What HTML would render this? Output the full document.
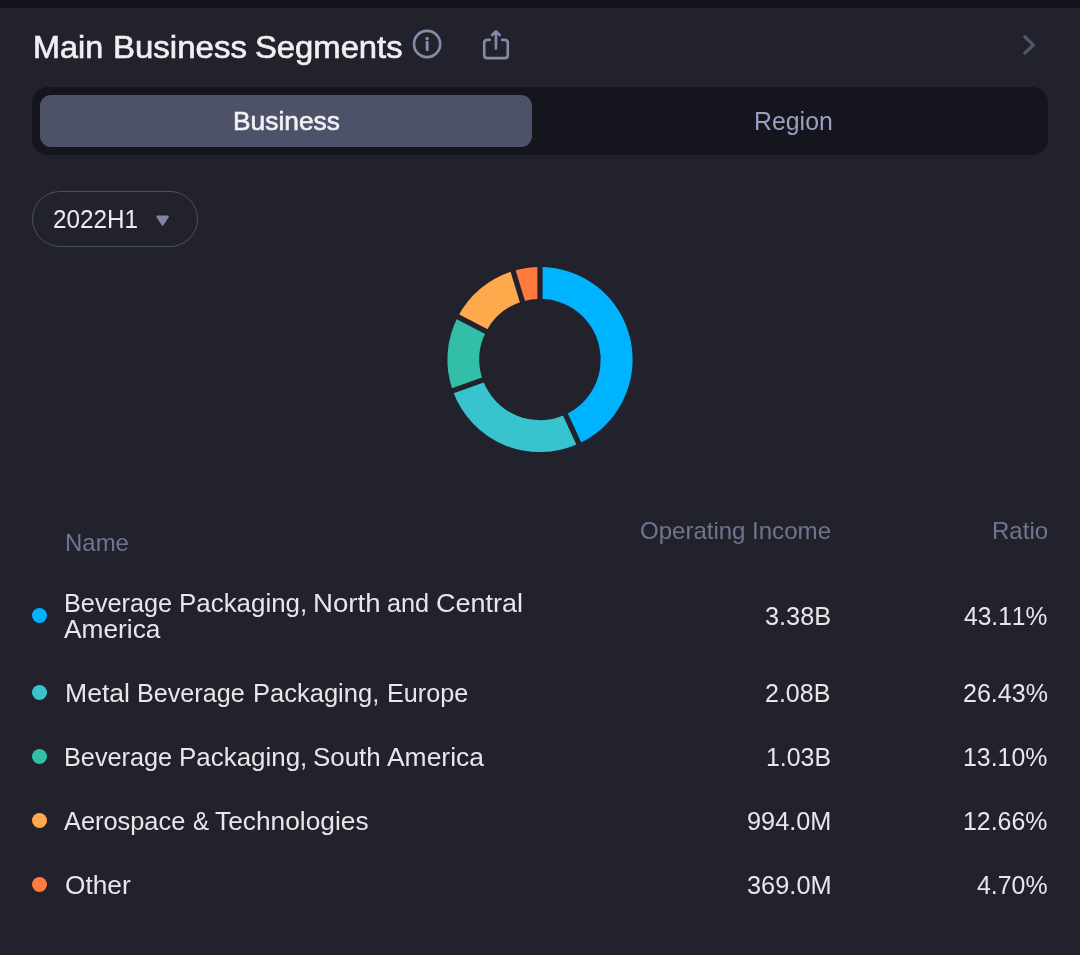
<!DOCTYPE html>
<html lang="en">
<head>
<meta charset="utf-8">
<title>Main Business Segments</title>
<style>
html,body{margin:0;padding:0;}
body{width:1080px;height:955px;background:#22222d;position:relative;overflow:hidden;
  font-family:"Liberation Sans",sans-serif;color:#e7e7ea;}
#layer{position:absolute;left:0;top:0;width:1080px;height:955px;will-change:transform;}
.topbar{position:absolute;left:0;top:0;width:1080px;height:8px;background:#14141c;}
.w{position:absolute;white-space:pre;transform-origin:left center;display:block;}
.num .w{font-kerning:none;}
.tabs{position:absolute;left:32px;top:87px;width:1016px;height:68px;border-radius:16px;background:#15151e;}
.tab-on{position:absolute;left:40px;top:95px;width:492px;height:52px;border-radius:11px;background:#4e5269;}
.pill{position:absolute;left:32px;top:191px;width:164px;height:54px;border:1px solid #4d5166;border-radius:28px;}
.dot{position:absolute;left:31.9px;width:15.4px;height:15.4px;border-radius:50%;display:block;}
.gfx{position:absolute;left:0;top:0;pointer-events:none;}
</style>
</head>
<body>
<div class="topbar"></div>
<div id="layer">
<h1 class="hd" style="margin:0;font-weight:normal">
<span class="w" style="left:32.67px;top:28.16px;font-size:32px;line-height:38px;color:#f0f0f2;transform:scaleX(1.0112);-webkit-text-stroke:0.65px #f0f0f2;">Main</span>
<span class="w" style="left:113.22px;top:28.16px;font-size:32px;line-height:38px;color:#f0f0f2;transform:scaleX(1.0311);-webkit-text-stroke:0.65px #f0f0f2;">Business</span>
<span class="w" style="left:254.89px;top:28.16px;font-size:32px;line-height:38px;color:#f0f0f2;transform:scaleX(1.0244);-webkit-text-stroke:0.65px #f0f0f2;">Segments</span>
</h1>
<div class="tabs"></div>
<div class="tab-on"></div>
<div class="tabtxt">
<span class="w" style="left:232.65px;top:105.74px;font-size:26px;line-height:31px;color:#f2f2f4;transform:scaleX(1.0137);-webkit-text-stroke:0.6px #f2f2f4;">Business</span>
<span class="w" style="left:754.37px;top:105.74px;font-size:26px;line-height:31px;color:#9b9ec0;transform:scaleX(0.9564);">Region</span>
</div>
<div class="pill"></div>
<span class="w" style="left:53.13px;top:203.74px;font-size:26px;line-height:31px;color:#ececee;transform:scaleX(0.9331);">2022H1</span>
<svg class="gfx" width="1080" height="955" viewBox="0 0 1080 955">
<!-- info icon -->
<g fill="none" stroke="#878bab" stroke-linecap="round" stroke-linejoin="round">
<circle cx="427.1" cy="44" r="13.1" stroke-width="2.6"/>
<line x1="427.15" y1="42.3" x2="427.15" y2="49.8" stroke-width="2.9"/>
</g>
<circle cx="427.15" cy="38.6" r="1.75" fill="#878bab"/>
<!-- share icon -->
<g fill="none" stroke="#868aaa" stroke-width="2.6" stroke-linecap="round" stroke-linejoin="round">
<path d="M489.7 39.9H487.4Q484.2 39.9 484.2 43.1V54.9Q484.2 58.1 487.4 58.1H504.6Q507.8 58.1 507.8 54.9V43.1Q507.8 39.9 504.6 39.9H502.2"/>
<path d="M495.95 48.4V31.6M492.2 35L495.95 31.4L499.7 35"/>
</g>
<!-- chevron -->
<path d="M1024.8 36.8L1033.4 45L1024.8 53.2" fill="none" stroke="#52566c" stroke-width="3.2" stroke-linecap="round" stroke-linejoin="round"/>
<!-- dropdown triangle -->
<path d="M157.6 216.6H167.6L162.6 224.4Z" fill="#8286a5" stroke="#8286a5" stroke-width="2.4" stroke-linejoin="round"/>
<!-- donut -->
<path fill="#00b3ff" d="M540.00 266.90A92.6 92.6 0 0 1 578.85 443.56L565.46 414.60A60.7 60.7 0 0 0 540.00 298.80Z"/>
<path fill="#38c4cf" d="M578.85 443.56A92.6 92.6 0 0 1 452.80 390.65L482.84 379.92A60.7 60.7 0 0 0 565.46 414.60Z"/>
<path fill="#33bfa7" d="M452.80 390.65A92.6 92.6 0 0 1 457.87 316.74L486.16 331.47A60.7 60.7 0 0 0 482.84 379.92Z"/>
<path fill="#ffa94d" d="M457.87 316.74A92.6 92.6 0 0 1 513.05 270.91L522.33 301.43A60.7 60.7 0 0 0 486.16 331.47Z"/>
<path fill="#ff7b3e" d="M513.05 270.91A92.6 92.6 0 0 1 540.00 266.90L540.00 298.80A60.7 60.7 0 0 0 522.33 301.43Z"/>
<line x1="540.00" y1="301.80" x2="540.00" y2="263.90" stroke="#22222d" stroke-width="5.3"/>
<line x1="564.21" y1="411.88" x2="580.11" y2="446.28" stroke="#22222d" stroke-width="5.3"/>
<line x1="485.66" y1="378.91" x2="449.97" y2="391.66" stroke="#22222d" stroke-width="5.3"/>
<line x1="488.82" y1="332.85" x2="455.20" y2="315.35" stroke="#22222d" stroke-width="5.3"/>
<line x1="523.21" y1="304.30" x2="512.18" y2="268.04" stroke="#22222d" stroke-width="5.3"/>
</svg>
<div class="thead">
<span class="w" style="left:64.50px;top:528.43px;font-size:24px;line-height:29px;color:#71748f;transform:scaleX(0.9984);">Name</span>
<span class="w" style="left:640.07px;top:516.43px;font-size:24px;line-height:29px;color:#71748f;transform:scaleX(1.0005);">Operating</span>
<span class="w" style="left:751.64px;top:516.43px;font-size:24px;line-height:29px;color:#71748f;transform:scaleX(1.0043);">Income</span>
<span class="w" style="left:992.40px;top:516.43px;font-size:24px;line-height:29px;color:#71748f;transform:scaleX(1.0019);">Ratio</span>
</div>
<div class="row">
<i class="dot" style="top:607.8px;background:#00b3ff"></i>
<div class="cell name">
<span class="w" style="left:64.44px;top:587.74px;font-size:26px;line-height:31px;color:#e7e7ea;transform:scaleX(0.9713);">Beverage</span>
<span class="w" style="left:179.18px;top:587.74px;font-size:26px;line-height:31px;color:#e7e7ea;transform:scaleX(0.9966);">Packaging,</span>
<span class="w" style="left:312.64px;top:587.74px;font-size:26px;line-height:31px;color:#e7e7ea;transform:scaleX(1.0628);">North</span>
<span class="w" style="left:386.71px;top:587.74px;font-size:26px;line-height:31px;color:#e7e7ea;transform:scaleX(0.9723);">and</span>
<span class="w" style="left:436.37px;top:587.74px;font-size:26px;line-height:31px;color:#e7e7ea;transform:scaleX(1.0378);">Central</span>
<span class="w" style="left:64.27px;top:613.74px;font-size:26px;line-height:31px;color:#e7e7ea;transform:scaleX(1.0110);">America</span>
</div>
<div class="cell num"><span class="w" style="left:764.63px;top:600.74px;font-size:26px;line-height:31px;color:#e7e7ea;transform:scaleX(0.9722);">3.38B</span></div>
<div class="cell num"><span class="w" style="left:963.91px;top:600.74px;font-size:26px;line-height:31px;color:#e7e7ea;transform:scaleX(0.9455);">43.11%</span></div>
</div>
<div class="row">
<i class="dot" style="top:684.9px;background:#38c4cf"></i>
<div class="cell name">
<span class="w" style="left:64.83px;top:677.74px;font-size:26px;line-height:31px;color:#e7e7ea;transform:scaleX(1.0226);">Metal</span>
<span class="w" style="left:136.74px;top:677.74px;font-size:26px;line-height:31px;color:#e7e7ea;transform:scaleX(0.9676);">Beverage</span>
<span class="w" style="left:252.61px;top:677.74px;font-size:26px;line-height:31px;color:#e7e7ea;transform:scaleX(0.9813);">Packaging,</span>
<span class="w" style="left:386.54px;top:677.74px;font-size:26px;line-height:31px;color:#e7e7ea;transform:scaleX(0.9687);">Europe</span>
</div>
<div class="cell num"><span class="w" style="left:765.30px;top:677.74px;font-size:26px;line-height:31px;color:#e7e7ea;transform:scaleX(0.9621);">2.08B</span></div>
<div class="cell num"><span class="w" style="left:962.70px;top:677.74px;font-size:26px;line-height:31px;color:#e7e7ea;transform:scaleX(0.9628);">26.43%</span></div>
</div>
<div class="row">
<i class="dot" style="top:748.7px;background:#33bfa7"></i>
<div class="cell name">
<span class="w" style="left:64.44px;top:741.74px;font-size:26px;line-height:31px;color:#e7e7ea;transform:scaleX(0.9713);">Beverage</span>
<span class="w" style="left:179.18px;top:741.74px;font-size:26px;line-height:31px;color:#e7e7ea;transform:scaleX(0.9974);">Packaging,</span>
<span class="w" style="left:312.75px;top:741.74px;font-size:26px;line-height:31px;color:#e7e7ea;transform:scaleX(0.9969);">South</span>
<span class="w" style="left:386.97px;top:741.74px;font-size:26px;line-height:31px;color:#e7e7ea;transform:scaleX(1.0163);">America</span>
</div>
<div class="cell num"><span class="w" style="left:765.69px;top:741.74px;font-size:26px;line-height:31px;color:#e7e7ea;transform:scaleX(0.9563);">1.03B</span></div>
<div class="cell num"><span class="w" style="left:963.19px;top:741.74px;font-size:26px;line-height:31px;color:#e7e7ea;transform:scaleX(0.9572);">13.10%</span></div>
</div>
<div class="row">
<i class="dot" style="top:812.9px;background:#ffa94d"></i>
<div class="cell name">
<span class="w" style="left:64.28px;top:805.74px;font-size:26px;line-height:31px;color:#e7e7ea;transform:scaleX(0.9756);">Aerospace</span>
<span class="w" style="left:193.49px;top:805.74px;font-size:26px;line-height:31px;color:#e7e7ea;transform:scaleX(0.9302);">&amp;</span>
<span class="w" style="left:215.47px;top:805.74px;font-size:26px;line-height:31px;color:#e7e7ea;transform:scaleX(1.0116);">Technologies</span>
</div>
<div class="cell num"><span class="w" style="left:747.08px;top:805.74px;font-size:26px;line-height:31px;color:#e7e7ea;transform:scaleX(0.9727);">994.0M</span></div>
<div class="cell num"><span class="w" style="left:963.19px;top:805.74px;font-size:26px;line-height:31px;color:#e7e7ea;transform:scaleX(0.9572);">12.66%</span></div>
</div>
<div class="row">
<i class="dot" style="top:876.8px;background:#ff7b3e"></i>
<div class="cell name">
<span class="w" style="left:64.74px;top:869.74px;font-size:26px;line-height:31px;color:#e7e7ea;transform:scaleX(1.0099);">Other</span>
</div>
<div class="cell num"><span class="w" style="left:746.82px;top:869.74px;font-size:26px;line-height:31px;color:#e7e7ea;transform:scaleX(0.9758);">369.0M</span></div>
<div class="cell num"><span class="w" style="left:977.10px;top:869.74px;font-size:26px;line-height:31px;color:#e7e7ea;transform:scaleX(0.9567);">4.70%</span></div>
</div>
</div>
</body>
</html>
